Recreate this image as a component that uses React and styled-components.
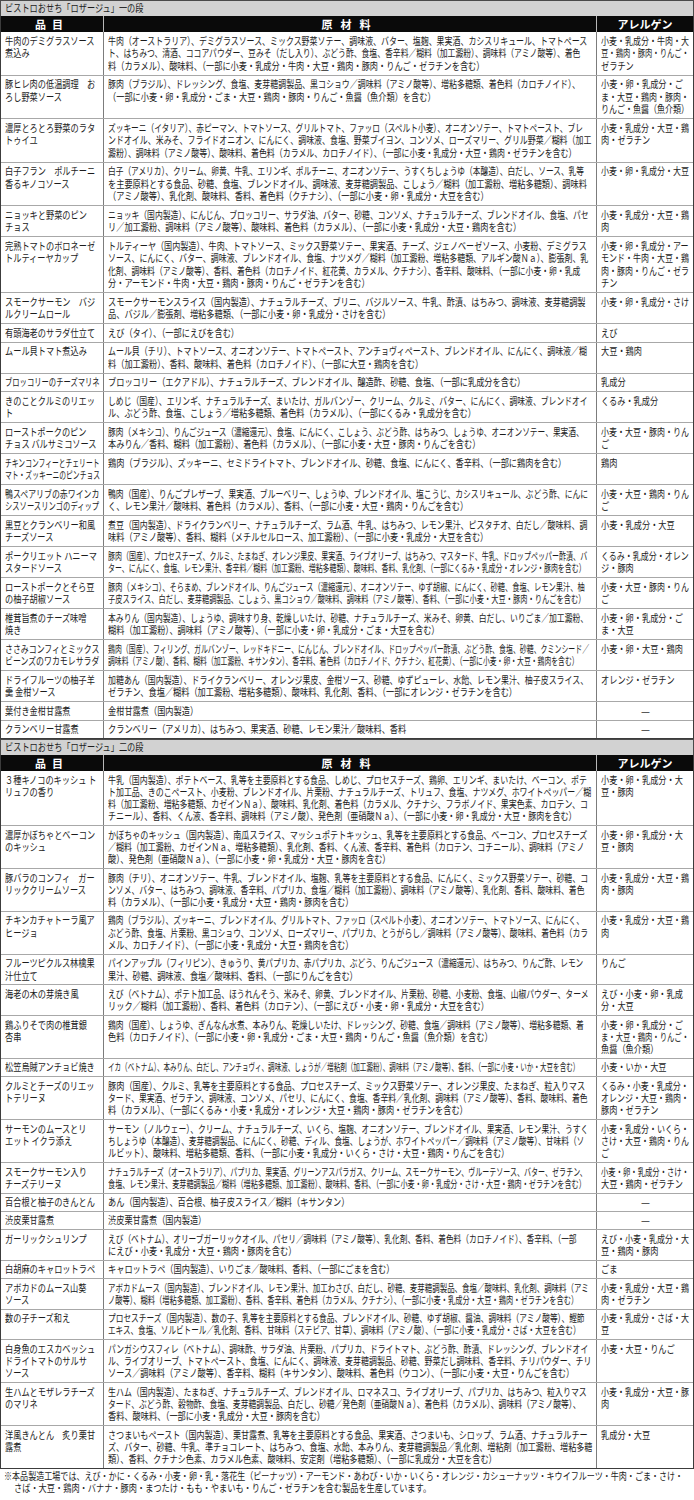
import React from "react";
import styled, { createGlobalStyle } from "styled-components";

const Global = createGlobalStyle`
  html, body { margin: 0; padding: 0; background: #ffffff; }
  body {
    font-family: "Noto Sans CJK JP", "Noto Sans", sans-serif;
    color: #1c1c1c;
  }
`;

const FONT = 10.5;
const FOOT_FONT = 10;
const MAXS = 0.78;

const textWidth = (s, size = FONT) => {
  let w = 0;
  for (const ch of s) {
    const c = ch.codePointAt(0);
    if (c === 32) w += 0.3;
    else if (c < 0x2000) w += 0.55;
    else if (c >= 0xff61 && c <= 0xff9f) w += 0.5;
    else w += 1;
  }
  return w * size;
};
const fit = (s, avail, size = FONT, max = MAXS) => Math.min(max, avail / textWidth(s, size));

const AVAIL = { name: 95, ing: 485, alg: 88, foot: 684 };

const sections = [
  {
    title: "ビストロおせち「ロザージュ」一の段",
    lh: "12.5px",
    rows: [
      [["牛肉のデミグラスソース", "煮込み"], ["牛肉（オーストラリア）、デミグラスソース、ミックス野菜ソテー、調味液、バター、塩麹、果実酒、カシスリキュール、トマトペース", "ト、はちみつ、清酒、ココアパウダー、豆みそ（だし入り）、ぶどう酢、食塩、香辛料／糊料（加工澱粉）、調味料（アミノ酸等）、着色", "料（カラメル）、酸味料、（一部に小麦・乳成分・牛肉・大豆・鶏肉・豚肉・りんご・ゼラチンを含む）"], ["小麦・乳成分・牛肉・大", "豆・鶏肉・豚肉・りんご・", "ゼラチン"]],
      [["豚ヒレ肉の低温調理　お", "ろし野菜ソース"], ["豚肉（ブラジル）、ドレッシング、食塩、麦芽糖調製品、黒コショウ／調味料（アミノ酸等）、増粘多糖類、着色料（カロチノイド）、", "（一部に小麦・卵・乳成分・ごま・大豆・鶏肉・豚肉・りんご・魚醤（魚介類）を含む）"], ["小麦・卵・乳成分・ご", "ま・大豆・鶏肉・豚肉・", "りんご・魚醤（魚介類）"]],
      [["濃厚とろとろ野菜のラタ", "トゥイユ"], ["ズッキーニ（イタリア）、赤ピーマン、トマトソース、グリルトマト、ファッロ（スペルト小麦）、オニオンソテー、トマトペースト、ブレ", "ンドオイル、米みそ、フライドオニオン、にんにく、調味液、食塩、野菜ブイヨン、コンソメ、ローズマリー、グリル野菜／糊料（加工", "澱粉）、調味料（アミノ酸等）、酸味料、着色料（カラメル、カロチノイド）、（一部に小麦・乳成分・大豆・鶏肉・ゼラチンを含む）"], ["小麦・乳成分・大豆・鶏", "肉・ゼラチン"]],
      [["白子フラン　ポルチーニ", "香るキノコソース"], ["白子（アメリカ）、クリーム、卵黄、牛乳、エリンギ、ポルチーニ、オニオンソテー、うすくちしょうゆ（本醸造）、白だし、ソース、乳等", "を主要原料とする食品、砂糖、食塩、ブレンドオイル、調味液、麦芽糖調製品、こしょう／糊料（加工澱粉、増粘多糖類）、調味料", "（アミノ酸等）、乳化剤、酸味料、香料、着色料（クチナシ）、（一部に小麦・卵・乳成分・大豆を含む）"], ["小麦・卵・乳成分・大豆"]],
      [["ニョッキと野菜のピン", "チョス"], ["ニョッキ（国内製造）、にんじん、ブロッコリー、サラダ油、バター、砂糖、コンソメ、ナチュラルチーズ、ブレンドオイル、食塩、パセ", "リ／加工澱粉、調味料（アミノ酸等）、酸味料、着色料（カラメル）、（一部に小麦・乳成分・大豆・鶏肉を含む）"], ["小麦・乳成分・大豆・鶏", "肉"]],
      [["完熟トマトのボロネーゼ", "トルティーヤカップ"], ["トルティーヤ（国内製造）、牛肉、トマトソース、ミックス野菜ソテー、果実酒、チーズ、ジェノベーゼソース、小麦粉、デミグラス", "ソース、にんにく、バター、調味液、ブレンドオイル、食塩、ナツメグ／糊料（加工澱粉、増粘多糖類、アルギン酸Ｎａ）、膨張剤、乳", "化剤、調味料（アミノ酸等）、香料、着色料（カロチノイド、紅花黄、カラメル、クチナシ）、香辛料、酸味料、（一部に小麦・卵・乳成", "分・アーモンド・牛肉・大豆・鶏肉・豚肉・りんご・ゼラチンを含む）"], ["小麦・卵・乳成分・アー", "モンド・牛肉・大豆・鶏", "肉・豚肉・りんご・ゼラ", "チン"]],
      [["スモークサーモン　バジ", "ルクリームロール"], ["スモークサーモンスライス（国内製造）、ナチュラルチーズ、ブリニ、バジルソース、牛乳、酢漬、はちみつ、調味液、麦芽糖調製", "品、バジル／膨張剤、増粘多糖類、（一部に小麦・卵・乳成分・さけを含む）"], ["小麦・卵・乳成分・さけ"]],
      [["有頭海老のサラダ仕立て"], ["えび（タイ）、（一部にえびを含む）"], ["えび"]],
      [["ムール貝トマト煮込み"], ["ムール貝（チリ）、トマトソース、オニオンソテー、トマトペースト、アンチョヴィペースト、ブレンドオイル、にんにく、調味液／糊", "料（加工澱粉）、香料、酸味料、着色料（カロチノイド）、（一部に大豆・鶏肉を含む）"], ["大豆・鶏肉"]],
      [["ブロッコリーのチーズマリネ"], ["ブロッコリー（エクアドル）、ナチュラルチーズ、ブレンドオイル、醸造酢、砂糖、食塩、（一部に乳成分を含む）"], ["乳成分"]],
      [["きのことクルミのリエッ", "ト"], ["しめじ（国産）、エリンギ、ナチュラルチーズ、まいたけ、ガルバンゾー、クリーム、クルミ、バター、にんにく、調味液、ブレンドオイ", "ル、ぶどう酢、食塩、こしょう／増粘多糖類、着色料（カラメル）、（一部にくるみ・乳成分を含む）"], ["くるみ・乳成分"]],
      [["ローストポークのピン", "チョス バルサミコソース"], ["豚肉（メキシコ）、りんごジュース（濃縮還元）、食塩、にんにく、こしょう、ぶどう酢、はちみつ、しょうゆ、オニオンソテー、果実酒、", "本みりん／香料、糊料（加工澱粉）、着色料（カラメル）、（一部に小麦・大豆・豚肉・りんごを含む）"], ["小麦・大豆・豚肉・りん", "ご"]],
      [["チキンコンフィーとチェリート", "マト・ズッキーニのピンチョス"], ["鶏肉（ブラジル）、ズッキーニ、セミドライトマト、ブレンドオイル、砂糖、食塩、にんにく、香辛料、（一部に鶏肉を含む）"], ["鶏肉"]],
      [["鴨スペアリブの赤ワインカ", "シスソースリンゴのディップ"], ["鴨肉（国産）、りんごプレザーブ、果実酒、ブルーベリー、しょうゆ、ブレンドオイル、塩こうじ、カシスリキュール、ぶどう酢、にんに", "く、レモン果汁／酸味料、着色料（カラメル）、香料、（一部に小麦・大豆・鶏肉・りんごを含む）"], ["小麦・大豆・鶏肉・りん", "ご"]],
      [["黒豆とクランベリー和風", "チーズソース"], ["煮豆（国内製造）、ドライクランベリー、ナチュラルチーズ、ラム酒、牛乳、はちみつ、レモン果汁、ピスタチオ、白だし／酸味料、調", "味料（アミノ酸等）、香料、糊料（メチルセルロース、加工澱粉）、（一部に小麦・乳成分・大豆を含む）"], ["小麦・乳成分・大豆"]],
      [["ポークリエット ハニーマ", "スタードソース"], ["豚肉（国産）、プロセスチーズ、クルミ、たまねぎ、オレンジ果皮、果実酒、ライブオリーブ、はちみつ、マスタード、牛乳、ドロップペッパー酢漬、バ", "ター、にんにく、食塩、レモン果汁、香辛料／糊料（加工澱粉、増粘多糖類）、酸味料、香料、乳化剤、（一部にくるみ・乳成分・オレンジ・豚肉を含む）"], ["くるみ・乳成分・オレン", "ジ・豚肉"]],
      [["ローストポークとそら豆", "の柚子胡椒ソース"], ["豚肉（メキシコ）、そらまめ、ブレンドオイル、りんごジュース（濃縮還元）、オニオンソテー、ゆず胡椒、にんにく、砂糖、食塩、レモン果汁、柚", "子皮スライス、白だし、麦芽糖調製品、こしょう、黒コショウ／酸味料、調味料（アミノ酸等）、香料、（一部に小麦・大豆・豚肉・りんごを含む）"], ["小麦・大豆・豚肉・りん", "ご"]],
      [["椎茸旨煮のチーズ味噌", "焼き"], ["本みりん（国内製造）、しょうゆ、調味すり身、乾燥しいたけ、砂糖、ナチュラルチーズ、米みそ、卵黄、白だし、いりごま／加工澱粉、", "糊料（加工澱粉）、調味料（アミノ酸等）、（一部に小麦・卵・乳成分・ごま・大豆を含む）"], ["小麦・卵・乳成分・ご", "ま・大豆"]],
      [["ささみコンフィとミックス", "ビーンズのワカモレサラダ"], ["鶏肉（国産）、フィリング、ガルバンゾー、レッドキドニー、にんじん、ブレンドオイル、ドロップペッパー酢漬、ぶどう酢、食塩、砂糖、クミンシード／", "調味料（アミノ酸）、香料、糊料（加工澱粉、キサンタン）、香辛料、着色料（カロチノイド、クチナシ、紅花黄）、（一部に小麦・卵・大豆・鶏肉を含む）"], ["小麦・卵・大豆・鶏肉"]],
      [["ドライフルーツの柚子羊", "羹 金柑ソース"], ["加糖あん（国内製造）、ドライクランベリー、オレンジ果皮、金柑ソース、砂糖、ゆずピューレ、水飴、レモン果汁、柚子皮スライス、", "ゼラチン、食塩／糊料（加工澱粉、増粘多糖類）、酸味料、乳化剤、香料、（一部にオレンジ・ゼラチンを含む）"], ["オレンジ・ゼラチン"]],
      [["葉付き金柑甘露煮"], ["金柑甘露煮（国内製造）"], null],
      [["クランベリー甘露煮"], ["クランベリー（アメリカ）、はちみつ、果実酒、砂糖、レモン果汁／酸味料、香料"], null],
    ],
  },
  {
    title: "ビストロおせち「ロザージュ」二の段",
    lh: "12.3px",
    rows: [
      [["３種キノコのキッシュ ト", "リュフの香り"], ["牛乳（国内製造）、ポテトベース、乳等を主要原料とする食品、しめじ、プロセスチーズ、鶏卵、エリンギ、まいたけ、ベーコン、ポテ", "ト加工品、きのこペースト、小麦粉、ブレンドオイル、片栗粉、ナチュラルチーズ、トリュフ、食塩、ナツメグ、ホワイトペッパー／糊", "料（加工澱粉、増粘多糖類、カゼインＮａ）、酸味料、乳化剤、着色料（カラメル、クチナシ、フラボノイド、果実色素、カロテン、コ", "チニール）、香料、くん液、香辛料、調味料（アミノ酸）、発色剤（亜硝酸Ｎａ）、（一部に小麦・卵・乳成分・大豆・豚肉を含む）"], ["小麦・卵・乳成分・大", "豆・豚肉"]],
      [["濃厚かぼちゃとベーコン", "のキッシュ"], ["かぼちゃのキッシュ（国内製造）、南瓜スライス、マッシュポテトキッシュ、乳等を主要原料とする食品、ベーコン、プロセスチーズ", "／糊料（加工澱粉、カゼインＮａ、増粘多糖類）、乳化剤、香料、くん液、香辛料、着色料（カロテン、コチニール）、調味料（アミノ", "酸）、発色剤（亜硝酸Ｎａ）、（一部に小麦・卵・乳成分・大豆・豚肉を含む）"], ["小麦・卵・乳成分・大", "豆・豚肉"]],
      [["豚バラのコンフィ　ガー", "リッククリームソース"], ["豚肉（チリ）、オニオンソテー、牛乳、ブレンドオイル、塩麹、乳等を主要原料とする食品、にんにく、ミックス野菜ソテー、砂糖、コ", "ンソメ、バター、はちみつ、調味液、香辛料、パプリカ、食塩／糊料（加工澱粉）、調味料（アミノ酸等）、乳化剤、香料、酸味料、着色", "料（カラメル）、（一部に小麦・乳成分・大豆・鶏肉・豚肉を含む）"], ["小麦・乳成分・大豆・鶏", "肉・豚肉"]],
      [["チキンカチャトーラ風ア", "ヒージョ"], ["鶏肉（ブラジル）、ズッキーニ、ブレンドオイル、グリルトマト、ファッロ（スペルト小麦）、オニオンソテー、トマトソース、にんにく、", "ぶどう酢、食塩、片栗粉、黒コショウ、コンソメ、ローズマリー、パプリカ、とうがらし／調味料（アミノ酸等）、酸味料、着色料（カラ", "メル、カロチノイド）、（一部に小麦・乳成分・大豆・鶏肉を含む）"], ["小麦・乳成分・大豆・鶏", "肉"]],
      [["フルーツピクルス林檎果", "汁仕立て"], ["パインアップル（フィリピン）、きゅうり、黄パプリカ、赤パプリカ、ぶどう、りんごジュース（濃縮還元）、はちみつ、りんご酢、レモン", "果汁、砂糖、調味液、食塩／酸味料、香料、（一部にりんごを含む）"], ["りんご"]],
      [["海老の木の芽焼き風"], ["えび（ベトナム）、ポテト加工品、ほうれんそう、米みそ、卵黄、ブレンドオイル、片栗粉、砂糖、小麦粉、食塩、山椒パウダー、ターメ", "リック／糊料（加工澱粉）、香料、着色料（カロテン）、（一部にえび・小麦・卵・乳成分・大豆を含む）"], ["えび・小麦・卵・乳成", "分・大豆"]],
      [["鶏ふりそで肉の椎茸銀", "杏串"], ["鶏肉（国産）、しょうゆ、ぎんなん水煮、本みりん、乾燥しいたけ、ドレッシング、砂糖、食塩／調味料（アミノ酸等）、増粘多糖類、着", "色料（カロチノイド）、（一部に小麦・卵・乳成分・ごま・大豆・鶏肉・りんご・魚醤（魚介類）を含む）"], ["小麦・卵・乳成分・ご", "ま・大豆・鶏肉・りんご・", "魚醤（魚介類）"]],
      [["松笠烏賊アンチョビ焼き"], ["イカ（ベトナム）、本みりん、白だし、アンチョヴィ、調味液、しょうが／増粘剤（加工澱粉）、調味料（アミノ酸等）、香料、（一部に小麦・いか・大豆を含む）"], ["小麦・いか・大豆"]],
      [["クルミとチーズのリエッ", "トテリーヌ"], ["豚肉（国産）、クルミ、乳等を主要原料とする食品、プロセスチーズ、ミックス野菜ソテー、オレンジ果皮、たまねぎ、粒入りマス", "タード、果実酒、ゼラチン、調味液、コンソメ、パセリ、にんにく、食塩、香辛料／乳化剤、調味料（アミノ酸等）、香料、酸味料、着色", "料（カラメル）、（一部にくるみ・小麦・乳成分・オレンジ・大豆・鶏肉・豚肉・ゼラチンを含む）"], ["くるみ・小麦・乳成分・", "オレンジ・大豆・鶏肉・", "豚肉・ゼラチン"]],
      [["サーモンのムースとリ", "エット イクラ添え"], ["サーモン（ノルウェー）、クリーム、ナチュラルチーズ、いくら、塩麹、オニオンソテー、ブレンドオイル、果実酒、レモン果汁、うすく", "ちしょうゆ（本醸造）、麦芽糖調製品、にんにく、砂糖、ディル、食塩、しょうが、ホワイトペッパー／調味料（アミノ酸等）、甘味料（ソ", "ルビット）、酸味料、増粘多糖類、香料、（一部に小麦・乳成分・いくら・さけ・大豆・鶏肉・りんごを含む）"], ["小麦・乳成分・いくら・", "さけ・大豆・鶏肉・りん", "ご"]],
      [["スモークサーモン入り", "チーズテリーヌ"], ["ナチュラルチーズ（オーストラリア）、パプリカ、果実酒、グリーンアスパラガス、クリーム、スモークサーモン、ヴルーテソース、バター、ゼラチン、", "食塩、レモン果汁、麦芽糖調製品／糊料（増粘多糖類、加工澱粉）、酸味料、香料、（一部に小麦・卵・乳成分・さけ・大豆・鶏肉・ゼラチンを含む）"], ["小麦・卵・乳成分・さけ・", "大豆・鶏肉・ゼラチン"]],
      [["百合根と柚子のきんとん"], ["あん（国内製造）、百合根、柚子皮スライス／糊料（キサンタン）"], null],
      [["渋皮栗甘露煮"], ["渋皮栗甘露煮（国内製造）"], null],
      [["ガーリックシュリンプ"], ["えび（ベトナム）、オリーブガーリックオイル、パセリ／調味料（アミノ酸等）、乳化剤、香料、着色料（カロチノイド）、香辛料、（一部", "にえび・小麦・乳成分・大豆・鶏肉・豚肉を含む）"], ["えび・小麦・乳成分・大", "豆・鶏肉・豚肉"]],
      [["白胡麻のキャロットラペ"], ["キャロットラペ（国内製造）、いりごま／酸味料、香料、（一部にごまを含む）"], ["ごま"]],
      [["アボカドのムース山葵", "ソース"], ["アボカドムース（国内製造）、ブレンドオイル、レモン果汁、加工わさび、白だし、砂糖、麦芽糖調製品、食塩／酸味料、乳化剤、調味料（アミ", "ノ酸等）、糊料（増粘多糖類、加工澱粉）、香料、香辛料、着色料（カラメル、クチナシ）、（一部に小麦・乳成分・大豆・鶏肉・ゼラチンを含む）"], ["小麦・乳成分・大豆・鶏", "肉・ゼラチン"]],
      [["数の子チーズ和え"], ["プロセスチーズ（国内製造）、数の子、乳等を主要原料とする食品、ブレンドオイル、砂糖、ゆず胡椒、醤油、調味料（アミノ酸等）、鰹節", "エキス、食塩、ソルビトール／乳化剤、香料、甘味料（ステビア、甘草）、調味料（アミノ酸）、（一部に小麦・乳成分・さば・大豆を含む）"], ["小麦・乳成分・さば・大", "豆"]],
      [["白身魚のエスカベッシュ", "ドライトマトのサルサ", "ソース"], ["パンガシウスフィレ（ベトナム）、調味酢、サラダ油、片栗粉、パプリカ、ドライトマト、ぶどう酢、酢漬、ドレッシング、ブレンドオイ", "ル、ライブオリーブ、トマトペースト、食塩、にんにく、調味液、麦芽糖調製品、砂糖、野菜だし調味料、香辛料、チリパウダー、チリ", "ソース／調味料（アミノ酸等）、香辛料、糊料（キサンタン）、酸味料、着色料（ウコン）、（一部に小麦・大豆・りんごを含む）"], ["小麦・大豆・りんご"]],
      [["生ハムとモザレラチーズ", "のマリネ"], ["生ハム（国内製造）、たまねぎ、ナチュラルチーズ、ブレンドオイル、ロマネスコ、ライブオリーブ、パプリカ、はちみつ、粒入りマス", "タード、ぶどう酢、穀物酢、食塩、麦芽糖調製品、白だし、砂糖／発色剤（亜硝酸Ｎａ）、着色料（カラメル）、調味料（アミノ酸等）、", "香料、酸味料、（一部に小麦・乳成分・大豆・豚肉を含む）"], ["小麦・乳成分・大豆・豚", "肉"]],
      [["洋風きんとん　炙り栗甘", "露煮"], ["さつまいもペースト（国内製造）、栗甘露煮、乳等を主要原料とする食品、果実酒、さつまいも、シロップ、ラム酒、ナチュラルチー", "ズ、バター、砂糖、牛乳、準チョコレート、はちみつ、食塩、水飴、本みりん、麦芽糖調製品／乳化剤、増粘剤（加工澱粉、増粘多糖", "類）、香料、クチナシ色素、カラメル色素、酸味料、安定剤（増粘多糖類）、（一部に乳成分・大豆を含む）"], ["乳成分・大豆"]],
    ],
  },
];

const footnote = [
  "※本品製造工場では、えび・かに・くるみ・小麦・卵・乳・落花生（ピーナッツ）・アーモンド・あわび・いか・いくら・オレンジ・カシューナッツ・キウイフルーツ・牛肉・ごま・さけ・",
  "さば・大豆・鶏肉・バナナ・豚肉・まつたけ・もも・やまいも・りんご・ゼラチンを含む製品を生産しています。",
];

const Page = styled.div`
  width: 694px;
  box-sizing: border-box;
  background: #ffffff;
`;

const Section = styled.section`
  display: flex;
  flex-direction: column;
  --lh: ${(p) => p.$lh};
`;

const Title = styled.div`
  height: 16px;
  box-sizing: border-box;
  padding: 0 4px;
  background: #d2d2d2;
  border: 1px solid #4a4a4a;
  border-bottom: none;
  display: flex;
  align-items: center;
  color: #1a1a1a;
  --lh: 12.5px;
`;

const Table = styled.div`
  border: 1px solid #3c3c3c;
  border-top: none;
  display: flex;
  flex-direction: column;
`;

const Row = styled.div`
  display: grid;
  grid-template-columns: 103px 493px 1fr;
  border-bottom: 1px solid #a8a8a8;
  &:last-child {
    border-bottom: none;
  }
`;

const HeadRow = styled.div`
  display: grid;
  grid-template-columns: 103px 493px 1fr;
  height: 16px;
  background: #0a0a0a;
  color: #ffffff;
`;

const HeadCell = styled.div`
  display: flex;
  align-items: center;
  justify-content: center;
  font-weight: 700;
  font-size: 11px;
  letter-spacing: ${(p) => p.$spacing || "0"};
  border-right: 1px solid #b8b8b8;
  &:last-child {
    border-right: none;
  }
`;

const Cell = styled.div`
  min-width: 0;
  padding: 2.5px 3px 2.5px 4px;
  border-right: 1px solid #7c7c7c;
  display: flex;
  flex-direction: column;
  align-items: ${(p) => (p.$center ? "center" : "flex-start")};
  &:last-child {
    border-right: none;
  }
`;

const Line = styled.span`
  display: block;
  width: max-content;
  white-space: nowrap;
  font-size: ${FONT}px;
  line-height: var(--lh, 12.5px);
  height: var(--lh, 12.5px);
  transform-origin: 0 50%;
  color: #1c1c1c;
`;

const Dash = styled.span`
  display: block;
  font-size: 10px;
  line-height: var(--lh, 12.5px);
  color: #333;
`;

const Foot = styled.div`
  padding: 1px 4px 0 4px;
  display: flex;
  flex-direction: column;
  --lh: 12px;
`;

const FootLine = styled(Line)`
  font-size: ${FOOT_FONT}px;
  margin-left: ${(p) => (p.$indent ? "10px" : "0")};
`;

function Lines({ lines, avail }) {
  return lines.map((l, i) => (
    <Line key={i} style={{ transform: `scaleX(${fit(l, avail)})` }}>
      {l}
    </Line>
  ));
}

function DataRow({ row }) {
  const [name, ing, alg] = row;
  return (
    <Row>
      <Cell>
        <Lines lines={name} avail={AVAIL.name} />
      </Cell>
      <Cell>
        <Lines lines={ing} avail={AVAIL.ing} />
      </Cell>
      <Cell $center={!alg}>
        {alg ? <Lines lines={alg} avail={AVAIL.alg} /> : <Dash>—</Dash>}
      </Cell>
    </Row>
  );
}

function MenuSection({ section }) {
  return (
    <Section $lh={section.lh}>
      <Title>
        <Line style={{ transform: `scaleX(${MAXS})` }}>{section.title}</Line>
      </Title>
      <Table>
        <HeadRow>
          <HeadCell $spacing="6px">品目</HeadCell>
          <HeadCell $spacing="8px">原材料</HeadCell>
          <HeadCell>アレルゲン</HeadCell>
        </HeadRow>
        {section.rows.map((r, i) => (
          <DataRow key={i} row={r} />
        ))}
      </Table>
    </Section>
  );
}

export default function App() {
  return (
    <Page>
      <Global />
      {sections.map((s, i) => (
        <MenuSection key={i} section={s} />
      ))}
      <Foot>
        <FootLine style={{ transform: `scaleX(${fit(footnote[0], AVAIL.foot, FOOT_FONT, 0.82)})` }}>
          {footnote[0]}
        </FootLine>
        <FootLine $indent style={{ transform: `scaleX(0.82)` }}>
          {footnote[1]}
        </FootLine>
      </Foot>
    </Page>
  );
}
